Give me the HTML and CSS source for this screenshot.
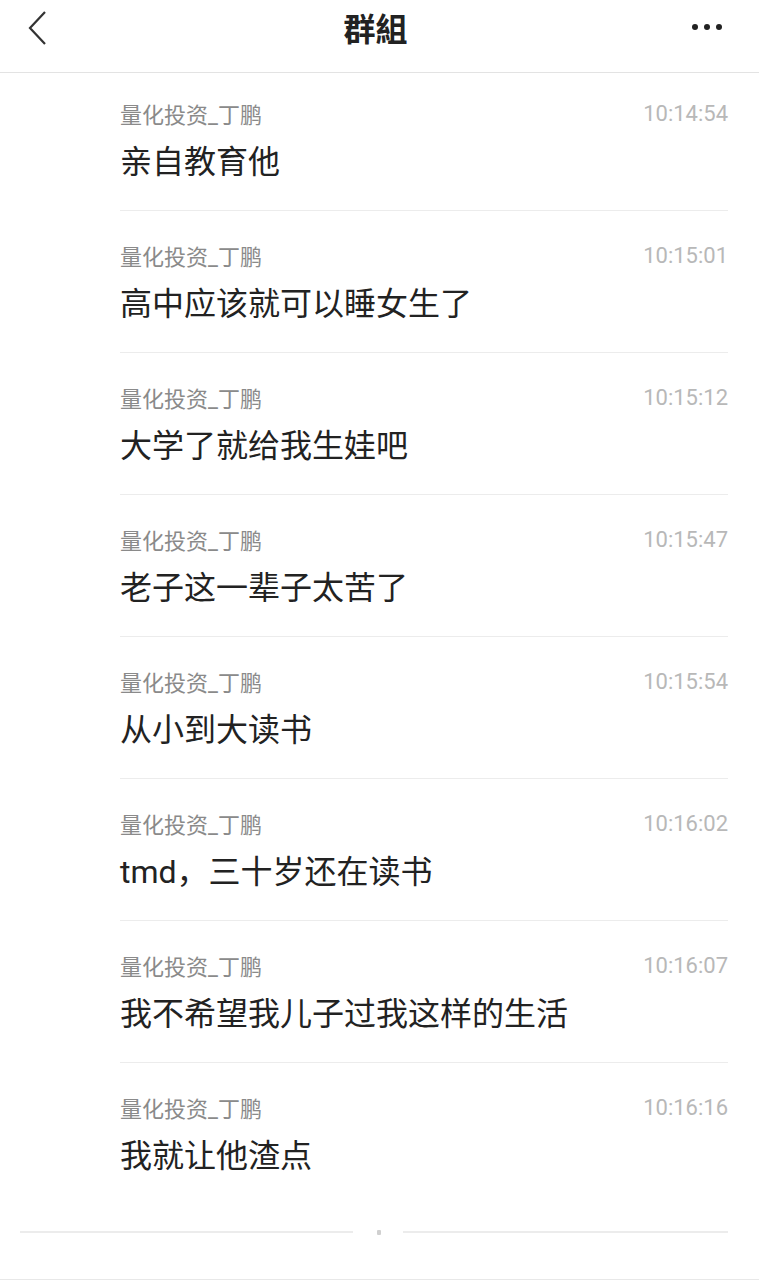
FILE: index.html
```html
<!DOCTYPE html>
<html lang="zh-CN">
<head>
  <meta charset="UTF-8">
  <meta name="viewport" content="width=device-width, initial-scale=1.0">
  <title>群組</title>
  <link rel="stylesheet" href="styles.css">
</head>
<body>
  <header class="topbar">
    <a class="back" href="#">
      <svg width="20" height="34" viewBox="0 0 20 34"><path d="M18 1 L3 17 L18 33" fill="none" stroke="#333" stroke-width="2.2"/></svg>
    </a>
    <h1>群組</h1>
    <div class="more"><span></span><span></span><span></span></div>
  </header>

  <ul class="msg-list">
    <li class="msg">
      <div class="meta"><span class="name">量化投资_丁鹏</span><span class="time">10:14:54</span></div>
      <div class="text">亲自教育他</div>
    </li>
    <li class="msg">
      <div class="meta"><span class="name">量化投资_丁鹏</span><span class="time">10:15:01</span></div>
      <div class="text">高中应该就可以睡女生了</div>
    </li>
    <li class="msg">
      <div class="meta"><span class="name">量化投资_丁鹏</span><span class="time">10:15:12</span></div>
      <div class="text">大学了就给我生娃吧</div>
    </li>
    <li class="msg">
      <div class="meta"><span class="name">量化投资_丁鹏</span><span class="time">10:15:47</span></div>
      <div class="text">老子这一辈子太苦了</div>
    </li>
    <li class="msg">
      <div class="meta"><span class="name">量化投资_丁鹏</span><span class="time">10:15:54</span></div>
      <div class="text">从小到大读书</div>
    </li>
    <li class="msg">
      <div class="meta"><span class="name">量化投资_丁鹏</span><span class="time">10:16:02</span></div>
      <div class="text">tmd，三十岁还在读书</div>
    </li>
    <li class="msg">
      <div class="meta"><span class="name">量化投资_丁鹏</span><span class="time">10:16:07</span></div>
      <div class="text">我不希望我儿子过我这样的生活</div>
    </li>
    <li class="msg">
      <div class="meta"><span class="name">量化投资_丁鹏</span><span class="time">10:16:16</span></div>
      <div class="text">我就让他渣点</div>
    </li>
  </ul>

  <div class="end-line"><span class="dot"></span></div>
  <div class="bottom-bar"></div>
</body>
</html>
```

FILE: styles.css
```css
body {
  margin: 0;
  background: #fff;
  font-family: Roboto, "Noto Sans CJK SC", sans-serif;
  color: #222;
}
.topbar {
  height: 72px;
  border-bottom: 1px solid #e3e3e3;
  display: flex;
  align-items: center;
  justify-content: center;
  position: relative;
}
.topbar h1 {
  margin: 0 0 19px 0;
  font-size: 32px;
  font-weight: 700;
  color: #222;
  transform: translateX(-4px);
}
.back {
  position: absolute;
  left: 27px;
  top: 11px;
}
.more {
  position: absolute;
  right: 37px;
  top: 24px;
  display: flex;
  gap: 6px;
}
.more span {
  width: 6px;
  height: 6px;
  border-radius: 50%;
  background: #222;
}
.msg-list {
  list-style: none;
  margin: 0;
  padding: 0 31px 0 120px;
}
.msg {
  padding: 32px 0 28px;
  border-bottom: 1px solid #ececec;
}
.msg:first-child {
  padding-top: 28px;
}
.msg:last-child {
  border-bottom: none;
}
.meta {
  display: flex;
  justify-content: space-between;
  align-items: center;
  height: 24px;
  font-size: 22px;
}
.name {
  color: #8a8a8a;
}
.time {
  color: #b8b8b8;
  font-size: 22px;
}
.text {
  margin-top: 17px;
  font-size: 32px;
  line-height: 40px;
  color: #222;
}
.end-line {
  margin: 27px 31px 0 20px;
  height: 2px;
  display: flex;
  justify-content: center;
  align-items: center;
  background: linear-gradient(to right, #ececec 0, #ececec 333px, transparent 333px, transparent 383px, #ececec 383px);
}
.end-line .dot {
  width: 4px;
  height: 5px;
  background: #d0d0d0;
  border-radius: 1px;
  margin-left: 10px;
}
.bottom-bar {
  margin-top: 46px;
  height: 2px;
  background: #e8e8e8;
}
```
